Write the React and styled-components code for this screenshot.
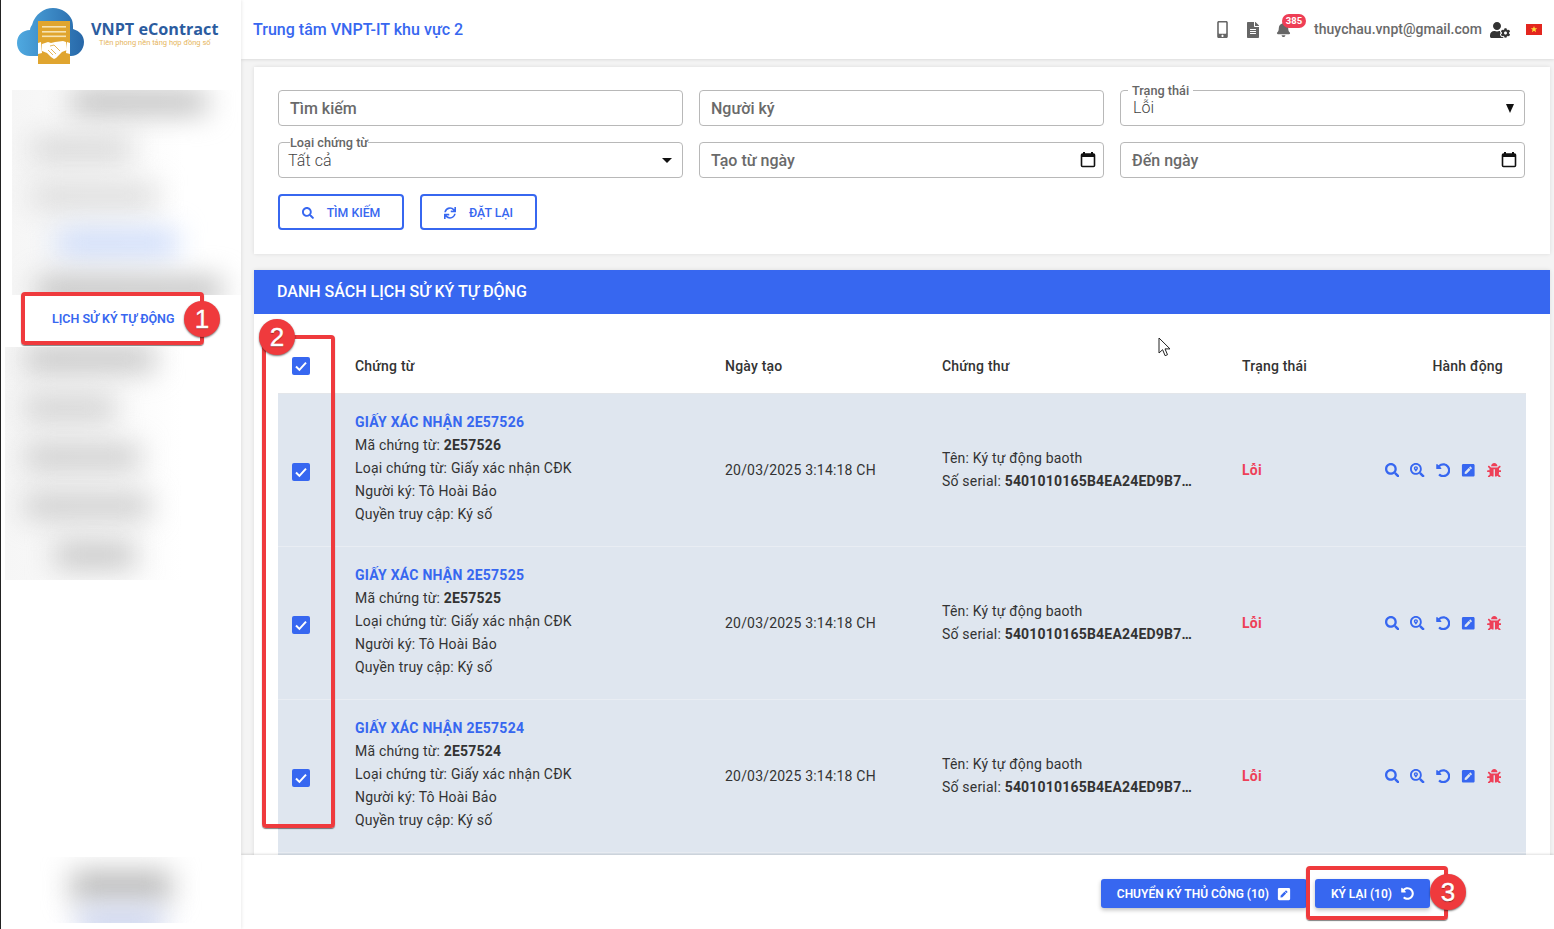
import React from "react";
import styled, { createGlobalStyle } from "styled-components";
import {
  FaSearch, FaSearchLocation, FaUndoAlt, FaPenSquare, FaBug, FaSync,
  FaFileAlt, FaBell, FaUserCog, FaMobileAlt,
} from "react-icons/fa";

const BLUE = "#3767f0";
const RED = "#ef3a3d";

const Global = createGlobalStyle`
  html, body { margin: 0; height: 100%; overflow: hidden; background: #f4f4f4; }
  * { box-sizing: border-box; }
  body { font-family: Roboto, "Liberation Sans", sans-serif; color: #333; }
`;

const Page = styled.div`
  position: relative;
  width: 1554px;
  height: 929px;
  display: flex;
  overflow: hidden;
`;

/* ---------- sidebar ---------- */
const Sidebar = styled.aside`
  width: 241px;
  flex: none;
  height: 100%;
  background: #fff;
  border-left: 1px solid #222;
  box-shadow: 1px 0 3px rgba(0, 0, 0, 0.08);
  display: flex;
  flex-direction: column;
  z-index: 2;
`;
const LogoBox = styled.div`
  height: 90px;
  padding: 8px 0 0 16px;
  display: flex;
  align-items: flex-start;
  gap: 6px;
`;
const LogoText = styled.div`
  padding-top: 13px;
  display: flex;
  flex-direction: column;
  align-items: center;
`;
const LogoName = styled.div`
  font-family: "Open Sans", sans-serif;
  font-weight: 700;
  font-size: 16.2px;
  line-height: 17px;
  color: #2b5c9f;
  white-space: nowrap;
`;
const LogoTag = styled.div`
  font-size: 7.5px;
  line-height: 9px;
  color: #e6b65e;
  white-space: nowrap;
`;
const BlurPanel = styled.div`
  height: ${(p) => p.$h}px;
  margin-left: ${(p) => p.$ml}px;
  overflow: hidden;
  background: linear-gradient(90deg, #f6f6f6, #fafafa 45%, #fff 75%);
  display: flex;
  flex-direction: column;
  gap: ${(p) => p.$gap}px;
  padding-top: ${(p) => p.$pt}px;
`;
const BlurBar = styled.div`
  flex: none;
  height: 24px;
  margin-left: ${(p) => p.$l}px;
  width: ${(p) => p.$w}px;
  background: ${(p) => p.$c || "#d2d2d2"};
  filter: blur(14px);
`;
const MenuItem = styled.div`
  height: 52px;
  flex: none;
  padding: 16px 0 0 51px;
  font-size: 12.5px;
  line-height: 16px;
  font-weight: 600;
  color: ${BLUE};
  white-space: nowrap;
`;
const BottomBlur = styled.div`
  margin: auto 35px 6px 34px;
  height: 66px;
  overflow: hidden;
  display: flex;
  flex-direction: column;
  align-items: center;
  padding-top: 14px;
  gap: 8px;
`;
const BottomBar = styled.div`
  width: ${(p) => p.$w}px;
  height: ${(p) => p.$h}px;
  background: ${(p) => p.$c};
  filter: blur(14px);
  flex: none;
`;

/* ---------- main ---------- */
const Main = styled.div`
  flex: 1;
  min-width: 0;
  height: 100%;
  display: flex;
  flex-direction: column;
`;
const Header = styled.header`
  height: 59px;
  flex: none;
  background: #fff;
  box-shadow: 0 1px 3px rgba(0, 0, 0, 0.1);
  display: flex;
  align-items: center;
  padding: 0 12px 0 12px;
  z-index: 1;
`;
const OrgTitle = styled.div`
  font-size: 16px;
  font-weight: 500;
  color: ${BLUE};
  flex: 1;
  letter-spacing: 0.02px;
`;
const HeaderIcon = styled.span`
  display: flex;
  color: #666;
  font-size: ${(p) => p.$size || 16}px;
  margin-right: ${(p) => p.$mr || 0}px;
  position: relative;
`;
const Badge = styled.span`
  position: absolute;
  left: 6px;
  top: -8px;
  width: 24px;
  height: 14px;
  border-radius: 7px;
  background: #ee3e55;
  color: #fff;
  font-size: 9.5px;
  font-weight: 700;
  line-height: 14px;
  text-align: center;
`;
const Email = styled.span`
  font-size: 14px;
  font-weight: 500;
  color: #6a6a6a;
  margin: -2px 8px 0 0;
  letter-spacing: 0.03px;
`;
const UserIcon = styled.span`
  display: flex;
  color: #333;
  font-size: 20px;
  margin-right: 16px;
`;
const Content = styled.div`
  flex: 1;
  min-height: 0;
  overflow: hidden;
  padding: 8px 4px 0 13px;
  display: flex;
  flex-direction: column;
  gap: 16px;
`;
const Card = styled.section`
  background: #fff;
  box-shadow: 0 0 4px rgba(0, 0, 0, 0.1);
  flex: none;
`;
const FilterCard = styled(Card)`
  padding: 23px 25px 24px 24px;
`;
const FilterGrid = styled.div`
  display: grid;
  grid-template-columns: repeat(3, 405px);
  grid-auto-rows: 36px;
  gap: 16px;
`;
const Field = styled.div`
  position: relative;
  border: 1px solid #b8b8b8;
  border-radius: 4px;
  display: flex;
  align-items: center;
  justify-content: space-between;
  padding: 0 ${(p) => p.$pr || 11}px 0 ${(p) => p.$pl || 11}px;
`;
const Placeholder = styled.span`
  font-size: 16px;
  font-weight: 500;
  color: #6a6a6a;
`;
const Legend = styled.span`
  position: absolute;
  top: -7px;
  left: ${(p) => p.$l}px;
  background: #fff;
  padding: 0 ${(p) => p.$p}px;
  font-size: 12.7px;
  line-height: 14px;
  font-weight: 500;
  color: #666;
  white-space: nowrap;
`;
const SelectValue = styled.span`
  font-size: 16px;
  font-weight: 300;
  color: #444;
  margin-top: ${(p) => p.$mt}px;
  letter-spacing: 0.1px;
`;
const Caret = styled.span`
  width: 0;
  height: 0;
  border-left: ${(p) => p.$hw}px solid transparent;
  border-right: ${(p) => p.$hw}px solid transparent;
  border-top: ${(p) => p.$h}px solid #111;
`;
const ButtonRow = styled.div`
  display: flex;
  gap: 16px;
  margin-top: 16px;
`;
const OutlineButton = styled.button`
  width: ${(p) => p.$w}px;
  height: 36px;
  border: 2px solid ${BLUE};
  border-radius: 4px;
  background: #fff;
  color: ${BLUE};
  font-family: inherit;
  font-size: 12.3px;
  font-weight: 500;
  display: flex;
  align-items: center;
  justify-content: center;
  gap: 13px;
  padding: 1px 0 0;
`;
const ListHead = styled.div`
  height: 44px;
  background: ${BLUE};
  color: #fff;
  font-size: 16px;
  font-weight: 500;
  line-height: 44px;
  padding-left: 23px;
`;
const ListBody = styled.div`
  padding: 24px 24px 0 24px;
`;
const Row = styled.div`
  display: grid;
  grid-template-columns: 77px 370px 217px 300px 100px 1fr;
  align-items: center;
  height: ${(p) => (p.$head ? 56 : 153)}px;
  background: ${(p) => (p.$head ? "#fff" : "#dfe6ef")};
  border-bottom: 1px solid ${(p) => (p.$head ? "#e3e6ea" : "#e9edf3")};
  font-size: 14px;
  letter-spacing: 0.2px;
  color: #333;
`;
const RowEdge = styled.div`
  height: 20px;
  background: #dfe6ef;
`;
const HeadCell = styled.div`
  font-weight: 500;
  color: #333;
  white-space: nowrap;
  text-align: ${(p) => p.$align || "left"};
  padding-right: ${(p) => p.$pr || 0}px;
`;
const CheckCell = styled.div`
  padding: ${(p) => (p.$head ? 0 : 3)}px 0 0 14px;
  display: flex;
`;
const CheckBox = styled.span`
  width: 18px;
  height: 18px;
  border-radius: 2px;
  background: ${BLUE};
  display: flex;
  align-items: center;
  justify-content: center;
`;
const DocCell = styled.div`
  display: flex;
  flex-direction: column;
  line-height: 23px;
  padding-bottom: 5px;
`;
const DocTitle = styled.div`
  color: ${BLUE};
  font-weight: 700;
  font-size: 14px;
  letter-spacing: 0.25px;
  line-height: 24px;
`;
const Strong = styled.b`
  font-weight: 700;
`;
const CertLine = styled.div`
  line-height: 23px;
  white-space: nowrap;
`;
const StatusCell = styled.div`
  color: #ee4058;
  font-weight: 700;
  font-size: 14px;
`;
const Actions = styled.div`
  display: flex;
  justify-content: flex-end;
  align-items: center;
  gap: 11px;
  padding-right: 25px;
  color: ${BLUE};
  font-size: 14.5px;
`;
const BugIcon = styled.span`
  display: flex;
  color: #ee4058;
`;
const Footer = styled.footer`
  height: 74px;
  flex: none;
  background: #fff;
  box-shadow: 0 -1px 2px rgba(0, 0, 0, 0.12);
  display: flex;
  justify-content: flex-end;
  align-items: flex-start;
  gap: 8px;
  padding: 24px 124px 0 0;
  z-index: 1;
`;
const SolidButton = styled.button`
  height: 29px;
  padding: 0 16px;
  border: 0;
  border-radius: 3px;
  background: ${BLUE};
  color: #fff;
  font-family: inherit;
  font-size: 12px;
  font-weight: 600;
  display: flex;
  align-items: center;
  gap: ${(p) => p.$gap}px;
  white-space: nowrap;
  box-shadow: 0 2px 4px rgba(0, 0, 0, 0.25);
`;

/* ---------- annotation overlay ---------- */
const Frame = styled.div`
  position: absolute;
  left: ${(p) => p.$x}px;
  top: ${(p) => p.$y}px;
  width: ${(p) => p.$w}px;
  height: ${(p) => p.$h}px;
  border: 4px solid ${RED};
  border-radius: 4px;
  box-shadow: 0 1px 1px rgba(0, 0, 0, 0.5);
  z-index: 5;
`;
const Num = styled.div`
  position: absolute;
  left: ${(p) => p.$x - 18}px;
  top: ${(p) => p.$y - 18}px;
  width: 36px;
  height: 36px;
  border-radius: 50%;
  background: ${RED};
  color: #fff;
  font-family: "Liberation Sans", sans-serif;
  font-size: 26px;
  line-height: 36px;
  text-align: center;
  -webkit-text-stroke: 0.4px #fff;
  box-shadow: 0 1px 2px rgba(0, 0, 0, 0.55);
  text-shadow: 0 1px 1px rgba(0, 0, 0, 0.4);
  z-index: 6;
`;
const Cursor = styled.svg`
  position: absolute;
  left: 1158px;
  top: 337px;
  z-index: 4;
`;

/* ---------- drawings ---------- */
const Logo = () => (
  <svg width="68" height="56" viewBox="0 0 68 56">
    <defs>
      <linearGradient id="cl" x1="0" x2="1" y1="0" y2="0">
        <stop offset="0" stopColor="#4fa9e0" />
        <stop offset="1" stopColor="#2767a8" />
      </linearGradient>
    </defs>
    <path
      d="M13 48C5 48 0 42 0 35c0-8 6-13 13-13 0-2 1-4 2-5C18 6 27 0 36 0c9 0 16 5 19 12 1 3 1 6 1 9 7 2 11 7 11 13 0 8-6 14-13 14z"
      fill="url(#cl)"
    />
    <rect x="21" y="13" width="32" height="43" fill="#e0a52f" />
    <rect x="25" y="18" width="24" height="1.6" fill="#f6e3b4" />
    <rect x="25" y="23" width="24" height="1.6" fill="#f6e3b4" />
    <rect x="25" y="27.5" width="24" height="1.6" fill="#f6e3b4" />
    <path d="M21 35l3-1 1 11-4 1zM53 35l-3-1-1 11 4 1z" fill="#fff" />
    <path
      d="M25 36l6-2 3 1 4-1 8-1 3 1 1 8-5 2-6 6-2 1-3-2-4-4-5-2z"
      fill="#fff"
    />
    <path d="M33 38l4-1 6 6M31 42l5 5M34 41l5 5" stroke="#e0a52f" strokeWidth="0.8" fill="none" />
  </svg>
);
const Check = () => (
  <svg width="14" height="14" viewBox="0 0 14 14">
    <path d="M2 7.5l3.4 3.4L12 3.6" fill="none" stroke="#fff" strokeWidth="2" />
  </svg>
);
const Calendar = () => (
  <svg width="16" height="17" viewBox="0 0 16 17" style={{ marginTop: -2 }}>
    <path d="M4 1v3M12 1v3" stroke="#111" strokeWidth="2" />
    <rect x="1.5" y="3" width="13" height="12.5" rx="1" fill="none" stroke="#111" strokeWidth="1.6" />
    <rect x="1.5" y="3" width="13" height="3" fill="#111" />
  </svg>
);
const Flag = () => (
  <svg width="16" height="11" viewBox="0 0 16 11">
    <rect width="16" height="11" fill="#e3261f" />
    <path d="M8 2l.9 2.3h2.4L9.4 5.8l.7 2.4L8 6.8 5.9 8.2l.7-2.4-1.9-1.5h2.4z" fill="#ffde3a" />
  </svg>
);

const rows = ["2E57526", "2E57525", "2E57524"];

const DocRow = ({ code }) => (
  <Row>
    <CheckCell>
      <CheckBox><Check /></CheckBox>
    </CheckCell>
    <DocCell>
      <DocTitle>GIẤY XÁC NHẬN {code}</DocTitle>
      <div>Mã chứng từ: <Strong>{code}</Strong></div>
      <div>Loại chứng từ: Giấy xác nhận CĐK</div>
      <div>Người ký: Tô Hoài Bảo</div>
      <div>Quyền truy cập: Ký số</div>
    </DocCell>
    <div>20/03/2025 3:14:18 CH</div>
    <div>
      <CertLine>Tên: Ký tự động baoth</CertLine>
      <CertLine>Số serial: <Strong>5401010165B4EA24ED9B7…</Strong></CertLine>
    </div>
    <StatusCell>Lỗi</StatusCell>
    <Actions>
      <FaSearch />
      <FaSearchLocation />
      <FaUndoAlt />
      <FaPenSquare />
      <BugIcon><FaBug /></BugIcon>
    </Actions>
  </Row>
);

export default function App() {
  return (
    <Page>
      <Global />
      <Sidebar>
        <LogoBox>
          <Logo />
          <LogoText>
            <LogoName>VNPT eContract</LogoName>
            <LogoTag>Tiên phong nền tảng hợp đồng số</LogoTag>
          </LogoText>
        </LogoBox>
        <BlurPanel $h={205} $ml={11} $gap={23} $pt={0}>
          <BlurBar $l={60} $w={135} $c="#bdbdbd" />
          <BlurBar $l={20} $w={100} $c="#d6d6d6" />
          <BlurBar $l={20} $w={125} $c="#dadada" />
          <BlurBar $l={45} $w={120} $c="#c8d8fa" />
          <BlurBar $l={25} $w={185} $c="#bcbcbc" />
        </BlurPanel>
        <MenuItem>LỊCH SỬ KÝ TỰ ĐỘNG</MenuItem>
        <BlurPanel $h={233} $ml={4} $gap={25} $pt={0}>
          <BlurBar $l={20} $w={130} $c="#c2c2c2" />
          <BlurBar $l={20} $w={90} $c="#cecece" />
          <BlurBar $l={20} $w={115} $c="#cacaca" />
          <BlurBar $l={20} $w={125} $c="#cacaca" />
          <BlurBar $l={50} $w={80} $c="#c2c2c2" />
        </BlurPanel>
        <BottomBlur>
          <BottomBar $w={100} $h={30} $c="#b8b8b8" />
          <BottomBar $w={85} $h={26} $c="#c6cfec" />
        </BottomBlur>
      </Sidebar>
      <Main>
        <Header>
          <OrgTitle>Trung tâm VNPT-IT khu vực 2</OrgTitle>
          <HeaderIcon $size={17} $mr={14}><FaMobileAlt /></HeaderIcon>
          <HeaderIcon $size={16} $mr={15}><FaFileAlt /></HeaderIcon>
          <HeaderIcon $size={15} $mr={23}>
            <FaBell />
            <Badge>385</Badge>
          </HeaderIcon>
          <Email>thuychau.vnpt@gmail.com</Email>
          <UserIcon><FaUserCog /></UserIcon>
          <Flag />
        </Header>
        <Content>
          <FilterCard>
            <FilterGrid>
              <Field><Placeholder>Tìm kiếm</Placeholder></Field>
              <Field><Placeholder>Người ký</Placeholder></Field>
              <Field $pl={12} $pr={10}>
                <Legend $l={7} $p={4}>Trạng thái</Legend>
                <SelectValue $mt={-2}>Lỗi</SelectValue>
                <Caret $hw={4.5} $h={9} />
              </Field>
              <Field $pl={9} $pr={10}>
                <Legend $l={11} $p={0}>Loại chứng từ</Legend>
                <SelectValue $mt={0}>Tất cả</SelectValue>
                <Caret $hw={5} $h={5} />
              </Field>
              <Field $pr={7}><Placeholder>Tạo từ ngày</Placeholder><Calendar /></Field>
              <Field $pr={7}><Placeholder>Đến ngày</Placeholder><Calendar /></Field>
            </FilterGrid>
            <ButtonRow>
              <OutlineButton $w={126}><FaSearch size={12} /> TÌM KIẾM</OutlineButton>
              <OutlineButton $w={117}><FaSync size={12} /> ĐẶT LẠI</OutlineButton>
            </ButtonRow>
          </FilterCard>
          <Card>
            <ListHead>DANH SÁCH LỊCH SỬ KÝ TỰ ĐỘNG</ListHead>
            <ListBody>
              <Row $head>
                <CheckCell $head><CheckBox><Check /></CheckBox></CheckCell>
                <HeadCell>Chứng từ</HeadCell>
                <HeadCell>Ngày tạo</HeadCell>
                <HeadCell>Chứng thư</HeadCell>
                <HeadCell>Trạng thái</HeadCell>
                <HeadCell $align="right" $pr={23}>Hành động</HeadCell>
              </Row>
              {rows.map((c) => <DocRow key={c} code={c} />)}
              <RowEdge />
            </ListBody>
          </Card>
        </Content>
        <Footer>
          <SolidButton $gap={8}>CHUYỂN KÝ THỦ CÔNG (10) <FaPenSquare size={14} /></SolidButton>
          <SolidButton $gap={9}>KÝ LẠI (10) <FaUndoAlt size={13} /></SolidButton>
        </Footer>
      </Main>

      <Cursor width="13" height="21" viewBox="0 0 13 21">
        <path d="M1 1v15l3.6-3.3 2.5 6 2.4-1-2.5-5.8H12z" fill="#fff" stroke="#222" strokeWidth="1" />
      </Cursor>
      <Frame $x={21} $y={292} $w={183} $h={53} />
      <Num $x={202} $y={319}>1</Num>
      <Frame $x={262} $y={335} $w={73} $h={493} />
      <Num $x={277} $y={337}>2</Num>
      <Frame $x={1306} $y={866} $w={142} $h={54} />
      <Num $x={1448} $y={892}>3</Num>
    </Page>
  );
}
